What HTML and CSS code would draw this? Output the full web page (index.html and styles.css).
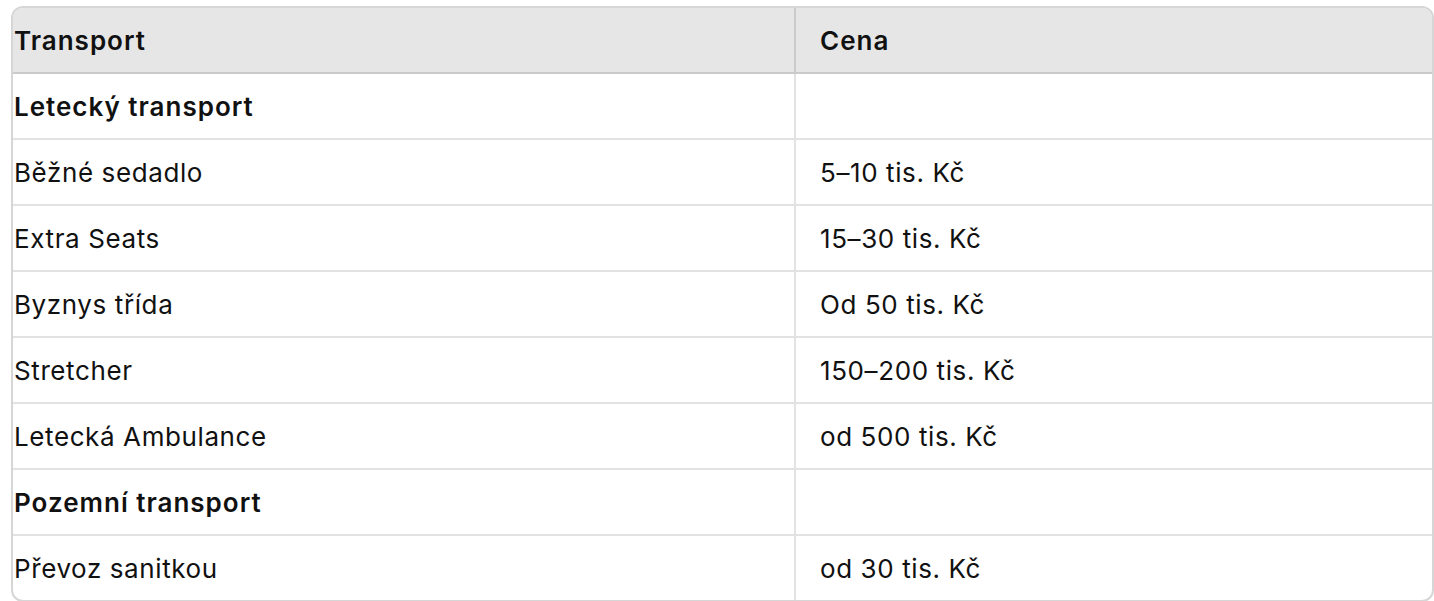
FILE: index.html
```html
<!DOCTYPE html>
<html lang="cs">
<head>
<meta charset="utf-8">
<link rel="stylesheet" href="styles.css">
</head>
<body>
<table class="price-table">
  <thead>
    <tr><th class="c1">Transport</th><th class="c2">Cena</th></tr>
  </thead>
  <tbody>
    <tr class="group"><td class="c1">Letecký transport</td><td class="c2"></td></tr>
    <tr><td class="c1">Běžné sedadlo</td><td class="c2">5–10 tis. Kč</td></tr>
    <tr><td class="c1">Extra Seats</td><td class="c2">15–30 tis. Kč</td></tr>
    <tr><td class="c1">Byznys třída</td><td class="c2">Od 50 tis. Kč</td></tr>
    <tr><td class="c1">Stretcher</td><td class="c2">150–200 tis. Kč</td></tr>
    <tr><td class="c1">Letecká Ambulance</td><td class="c2">od 500 tis. Kč</td></tr>
    <tr class="group"><td class="c1">Pozemní transport</td><td class="c2"></td></tr>
    <tr class="last"><td class="c1">Převoz sanitkou</td><td class="c2">od 30 tis. Kč</td></tr>
  </tbody>
</table>
</body>
</html>
```
FILE: styles.css
```css
html, body {
  margin: 0;
  padding: 0;
  background: #ffffff;
}
body {
  padding: 6px 0 0 11px;
  font-family: Inter, "Liberation Sans", sans-serif;
  color: #111111;
}
.price-table {
  width: 1423px;
  border-collapse: separate;
  border-spacing: 0;
  border: 2px solid #d6d6d6;
  border-radius: 12px;
  overflow: hidden;
  font-size: 26px;
  letter-spacing: 0.6px;
  table-layout: fixed;
}
.price-table th,
.price-table td {
  padding: 0;
  box-sizing: border-box;
  vertical-align: middle;
  text-align: left;
  border-bottom: 2px solid #e2e2e2;
}
.price-table th {
  height: 66px;
  background: #e6e6e6;
  font-weight: 600;
  letter-spacing: 1px;
  border-bottom-color: #cacaca;
}
.price-table td {
  height: 66px;
  font-weight: 400;
}
.price-table .c1 {
  width: 783px;
  padding-left: 1px;
  border-right: 2px solid #e2e2e2;
}
.price-table th.c1 {
  border-right-color: #cacaca;
}
.price-table .c2 {
  padding-left: 24px;
}
.price-table .group td {
  font-weight: 600;
  letter-spacing: 1px;
}
.price-table .last td {
  height: 64px;
  border-bottom: none;
}
```
